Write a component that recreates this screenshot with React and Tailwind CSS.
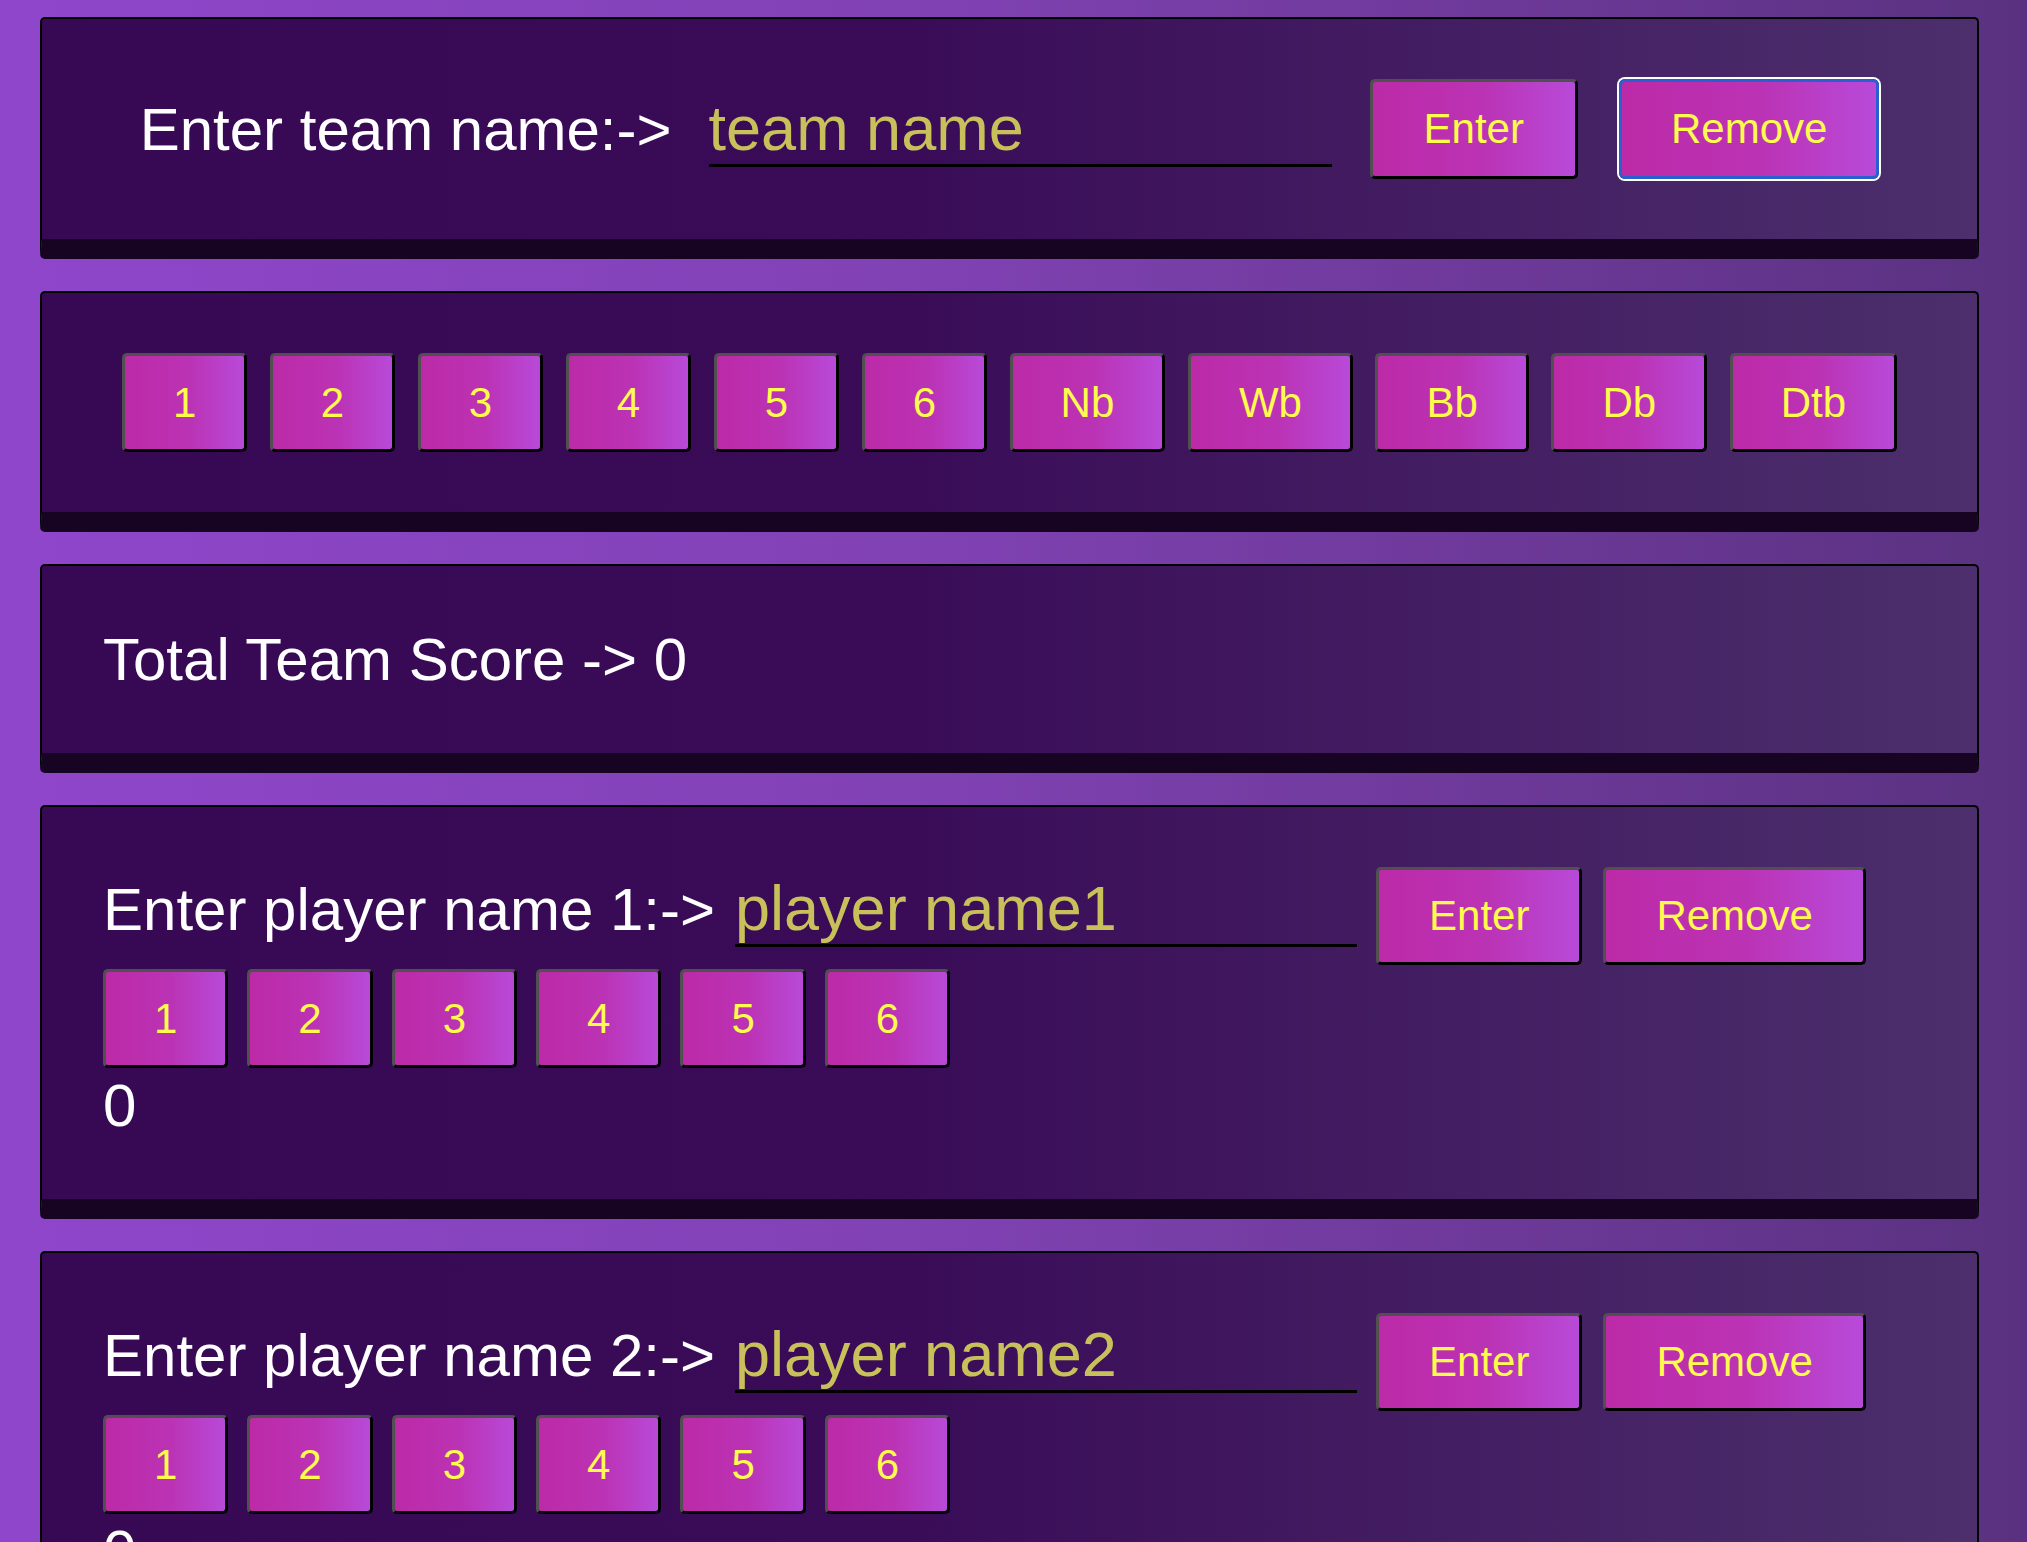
import { useState } from "react";

const scoreKeys = ["1", "2", "3", "4", "5", "6", "Nb", "Wb", "Bb", "Db", "Dtb"];
const runKeys = ["1", "2", "3", "4", "5", "6"];

const cardClass =
  "rounded-[5px] border-2 border-black border-b-[20px] border-b-[#170322] bg-[linear-gradient(to_right,#370955_0%,#3a0c58_45%,#4c2f6c_100%)] py-[60px]";

const keyClass =
  "flex items-center justify-center rounded-[5px] border-[3px] border-t-[#505050] border-l-[#505050] border-b-black border-r-black bg-[linear-gradient(to_right,#bc2aa7,#bb33b5_55%,#b84ad9)] text-[42px] leading-none text-[#fffb4d]";

function KeyButton({ label, className = "", onClick }) {
  return (
    <button type="button" onClick={onClick} className={`${keyClass} ${className}`}>
      {label}
    </button>
  );
}

function PlayerCard({ index }) {
  const [score, setScore] = useState(0);

  return (
    <section className={`${cardClass} px-[61px]`}>
      <div className="mb-[4px] flex items-baseline">
        <span className="text-[60px] leading-[67px] text-white">Enter player name {index}:-&gt;</span>
        <input
          type="text"
          placeholder={`player name${index}`}
          className="ml-[20px] w-[622px] border-b-[3px] border-black bg-transparent p-0 text-[63px] leading-[72px] text-[#c8c05a] outline-none placeholder:text-[#c8c05a]"
        />
        <KeyButton label="Enter" className="ml-[19px] h-[98px] px-[50px]" />
        <KeyButton label="Remove" className="ml-[21px] h-[98px] px-[50px]" />
      </div>
      <div className="mb-[4px] flex gap-[19px]">
        {runKeys.map((key) => (
          <KeyButton
            key={key}
            label={key}
            className="h-[99px] px-[48px]"
            onClick={() => setScore((current) => current + Number(key))}
          />
        ))}
      </div>
      <p className="text-[60px] leading-[67px] text-white">{score}</p>
    </section>
  );
}

export default function App() {
  return (
    <div className="h-screen overflow-hidden bg-[linear-gradient(to_right,#8f46cb_0%,#8142b4_45%,#5a3180_100%)] pl-[40px] pr-[48px] pt-[17px] font-['Liberation_Sans',Arial,sans-serif]">
      <div className="flex flex-col gap-[32px]">
        <section className={`${cardClass} flex items-center justify-center`}>
          <span className="text-[60px] leading-[67px] text-white">Enter team name:-&gt;</span>
          <input
            type="text"
            placeholder="team name"
            className="ml-[37px] w-[623px] border-b-[3px] border-black bg-transparent p-0 text-[63px] leading-[72px] text-[#c8c05a] outline-none placeholder:text-[#c8c05a]"
          />
          <KeyButton label="Enter" className="ml-[38px] h-[100px] px-[51px]" />
          <button
            type="button"
            className="ml-[41px] flex h-[100px] items-center justify-center rounded-[6px] border-[3px] border-[#2b5fd0] bg-[linear-gradient(to_right,#bc2aa7,#bb33b5_55%,#b84ad9)] px-[49px] text-[42px] leading-none text-[#fffb4d] shadow-[0_0_0_2px_#ffffff]"
          >
            Remove
          </button>
        </section>

        <section className={`${cardClass} flex justify-center gap-[22.6px]`}>
          {scoreKeys.map((key) => (
            <KeyButton key={key} label={key} className="h-[99px] px-[48px]" />
          ))}
        </section>

        <section className={`${cardClass} px-[61px]`}>
          <p className="text-[60px] leading-[67px] text-white">Total Team Score -&gt; 0</p>
        </section>

        <PlayerCard index={1} />
        <PlayerCard index={2} />
      </div>
    </div>
  );
}
